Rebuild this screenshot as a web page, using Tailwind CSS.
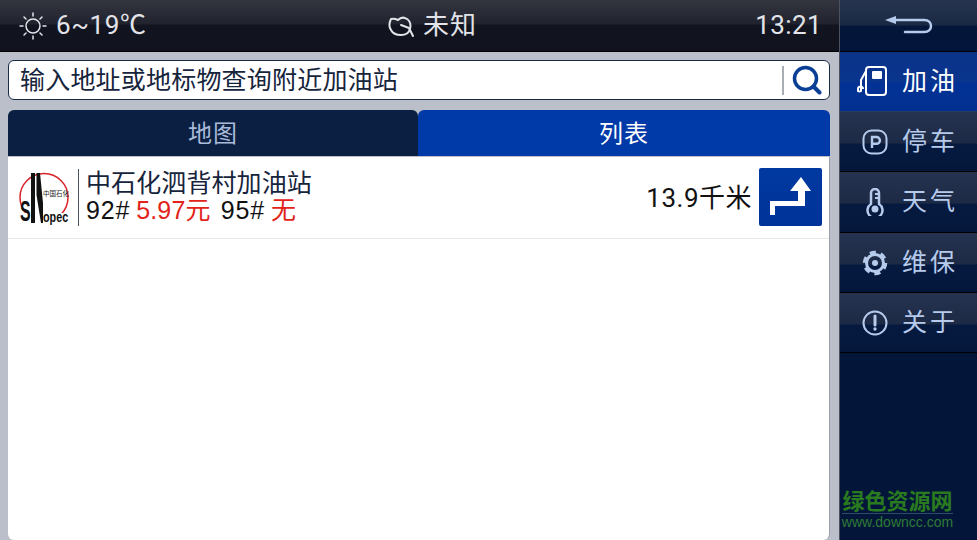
<!DOCTYPE html>
<html lang="zh"><head><meta charset="utf-8">
<script src="https://cdn.jsdelivr.net/npm/@tailwindcss/browser@4"></script>
</head>
<body class="m-0">
<div class="w-[977px] h-[540px] flex overflow-hidden font-['Roboto','Noto_Sans_CJK_SC',sans-serif] bg-[#babfc9]">
  <!-- left -->
  <div class="w-[839px] flex flex-col shrink-0">
    <div class="h-[52px] shrink-0 border-b border-black bg-[linear-gradient(#33353f_0,#20222e_24px,#12151f_25px,#10131e_100%)] text-[#e2e4ea] text-[26px] flex items-center">
      <div class="w-[262px] flex items-center pl-[18px] gap-[8px]">
        <svg width="30" height="30" viewBox="0 0 30 30" fill="none" stroke="#e2e4ea" stroke-width="1.500" stroke-linecap="round"><circle cx="15" cy="15" r="7"/><path d="M15 2v3M15 25v3M2 15h3M25 15h3M6 6l2 2M22 22l2 2M6 24l2-2M22 8l2-2"/></svg>
        <span class="tracking-[0.6px]">6~19℃</span>
      </div>
      <div class="w-[280px] flex items-center gap-[9px] pl-[126px]">
        <svg width="26" height="26" viewBox="0 0 26 26" fill="none" stroke="#e2e4ea" stroke-width="2" stroke-linecap="round" stroke-linejoin="round"><path d="M3 6C1 10 1 14 3 17c2 4 6 5 10 5 4 0 8-2 9-6 1-4 0-8-3-10-3-2-6-2-9 1-2-1-4-2-7-1z"/><path d="M13 12l8 3 4 8"/></svg>
        <span class="tracking-[1px] whitespace-nowrap">未知</span>
      </div>
      <div class="flex-1 text-right pr-[17px] tracking-[0.4px]">13:21</div>
    </div>

    <div class="ml-[8px] mr-[9px] mt-[8px] h-[40px] shrink-0 bg-white border border-[#1c2b44] rounded-[6px] flex items-center">
      <span class="flex-1 pl-[11px] text-[25px] leading-none text-[#16243c] tracking-[0.2px]">输入地址或地标物查询附近加油站</span>
      <div class="w-[2px] h-[29px] bg-[#a9adb4]"></div>
      <div class="w-[45px] flex justify-center">
        <svg width="30" height="30" viewBox="0 0 30 30" fill="none" stroke="#0a3f96" stroke-linecap="round"><circle cx="13.500" cy="13.500" r="11" stroke-width="3.500"/><path d="M21.500 21.500l6 6" stroke-width="4"/></svg>
      </div>
    </div>

    <div class="ml-[8px] mr-[9px] mt-[10px] h-[46px] shrink-0 flex text-[24px]">
      <div class="w-[410px] pt-[2px] bg-[#0a1f42] rounded-t-[6px] text-[#a9b9d8] flex items-center justify-center tracking-[1px]">地图</div>
      <div class="flex-1 pt-[2px] bg-[#0039a8] rounded-t-[6px] text-white flex items-center justify-center tracking-[1px]">列表</div>
    </div>

    <div class="ml-[8px] mr-[9px] mt-[1px] flex-1 bg-white rounded-b-[6px] border-r border-[#9aa0ab]">
      <div class="h-[82px] border-b border-[#e6e6e6] flex items-center pl-[10px] pr-[7px]">
        <svg width="52" height="57" viewBox="0 0 52 57" class="shrink-0 overflow-visible">
          <circle cx="26" cy="28.500" r="24" fill="none" stroke="#d8232a" stroke-width="1.500"/>
          <rect x="0" y="44" width="24" height="13" fill="#fff"/>
          <rect x="24" y="44" width="28" height="13" fill="#fff"/>
          <path d="M13 4h4v50h-4zM18.500 4h3.500l3 30V54h-2l-4.500-28z" fill="#111"/>
          <text x="38" y="27" font-size="6.500" fill="#222" text-anchor="middle">中国石化</text>
          <text transform="translate(2 52) scale(.55 1)" font-size="29" font-weight="700" fill="#111" font-family="Liberation Sans">S</text>
          <text transform="translate(25 53) scale(.72 1)" font-size="15" font-weight="700" fill="#111" font-family="Liberation Sans">opec</text>
        </svg>
        <div class="w-[1px] h-[57px] bg-[#4b5568] ml-[8px] shrink-0"></div>
        <div class="ml-[7px] -mt-[2px] flex-1 flex flex-col">
          <span class="text-[25px] leading-[26px] text-[#16243c] tracking-[0.1px]">中石化泗背村加油站</span>
          <div class="text-[25px] leading-[26px] font-['Liberation_Sans','Noto_Sans_CJK_SC',sans-serif] text-[#111] flex gap-[6px] tracking-[0.8px]">
            <span>92#</span><span class="text-[#e2231a] tracking-[0.2px]">5.97元</span><span class="ml-[4px]">95#</span><span class="text-[#e2231a]">无</span>
          </div>
        </div>
        <span class="text-[26px] text-[#111] mr-[7px] mt-[1px] tracking-[0.5px]">13.9千米</span>
        <div class="w-[63px] h-[58px] mb-[2px] rounded-[2px] bg-[linear-gradient(#0039a0,#003399)] shrink-0">
          <svg width="63" height="58" viewBox="0 0 63 58"><path d="M42 9 52 23H46V38H16V47H11V33H39V23H31z" fill="#fff"/></svg>
        </div>
      </div>
    </div>
  </div>

  <!-- sidebar -->
  <div class="flex-1 bg-[#03163a] border-l border-[#4a5160] flex flex-col text-[#b6cbec] text-[25px]">
    <div class="h-[52px] shrink-0 border-b border-black bg-[linear-gradient(#263450_0,#1a2943_25px,#04173a_26px,#02143a_100%)] flex items-center justify-center">
      <svg width="50" height="22" viewBox="0 0 50 22" fill="none"><path d="M1 5l11-4v8z" fill="#b6cbec"/><path d="M10 5h30c5 0 7 3 7 6s-2 6-7 6H21" stroke="#b6cbec" stroke-width="2.500" stroke-linecap="round"/></svg>
    </div>
    <div class="h-[60px] shrink-0 bg-[linear-gradient(#0a3389_0,#0a358e_30px,#023295_31px,#013090_100%)] border-b border-[#2a3c62] flex items-center pl-[17px] text-white">
      <svg width="32" height="32" viewBox="0 0 32 32" fill="none" stroke="#fff" stroke-width="2"><rect x="9" y="1" width="20" height="28" rx="3"/><rect x="15" y="5" width="10" height="8" fill="#fff" stroke="none" rx="1"/><path d="M9 5 4 14v11a2.500 2.500 0 0 1-3 0v-2a2.500 2.500 0 0 1 5 0"/></svg>
      <span class="ml-[13px] tracking-[3px]">加油</span>
    </div>
    <div class="h-[60px] shrink-0 bg-[linear-gradient(#253350_0,#1c2a46_31px,#061a40_32px,#04173b_100%)] border-b border-black flex items-center pl-[22px]">
      <svg width="26" height="26" viewBox="0 0 26 26" fill="none" stroke="#b6cbec"><rect x="1.500" y="1.500" width="23" height="23" rx="8" stroke-width="2"/><path d="M10 19V8h4.500a3.300 3.300 0 0 1 0 6.800H10" stroke-width="2.400"/></svg>
      <span class="ml-[14px] tracking-[3px]">停车</span>
    </div>
    <div class="h-[61px] shrink-0 bg-[linear-gradient(#253350_0,#1c2a46_31px,#061a40_32px,#04173b_100%)] border-b border-black flex items-center pl-[26px]">
      <svg width="18" height="28" viewBox="0 0 18 28" fill="none" stroke="#b6cbec" stroke-width="2.500"><path d="M5 16V5a4 4 0 0 1 8 0v11a7.500 7.500 0 1 1-8 0z"/><path d="M9 6h4M9 10h4" stroke-width="2"/><circle cx="9" cy="21" r="3.500" fill="#b6cbec" stroke="none"/></svg>
      <span class="ml-[18px] tracking-[3px]">天气</span>
    </div>
    <div class="h-[60px] shrink-0 bg-[linear-gradient(#253350_0,#1c2a46_31px,#061a40_32px,#04173b_100%)] border-b border-black flex items-center pl-[22px]">
      <svg width="26" height="26" viewBox="0 0 26 26" fill="none" stroke="#b6cbec"><circle cx="13" cy="13" r="8.500" stroke-width="3"/><circle cx="13" cy="13" r="10.500" stroke-width="3.500" stroke-dasharray="6 5"/><circle cx="13" cy="13" r="3" fill="#b6cbec" stroke="none"/></svg>
      <span class="ml-[14px] tracking-[3px]">维保</span>
    </div>
    <div class="h-[60px] shrink-0 bg-[linear-gradient(#253350_0,#1c2a46_31px,#061a40_32px,#04173b_100%)] border-b border-black flex items-center pl-[22px]">
      <svg width="26" height="26" viewBox="0 0 26 26" fill="none" stroke="#b6cbec" stroke-width="2"><circle cx="13" cy="13" r="11.500"/><path d="M13 6v9" stroke-width="3" stroke-linecap="round"/><circle cx="13" cy="19" r="1.700" fill="#b6cbec" stroke="none"/></svg>
      <span class="ml-[14px] tracking-[3px]">关于</span>
    </div>
    <div class="mt-auto mb-[10px] flex flex-col items-center pr-[22px]">
      <span class="text-[22px] leading-[22px] font-bold text-[#2a7a1f] border-b border-[#2c4a6a]">绿色资源网</span>
      <span class="text-[14px] leading-[16px] text-[#2f7a34] font-['Liberation_Sans',sans-serif]">www.downcc.com</span>
    </div>
  </div>
</div>
</body></html>
